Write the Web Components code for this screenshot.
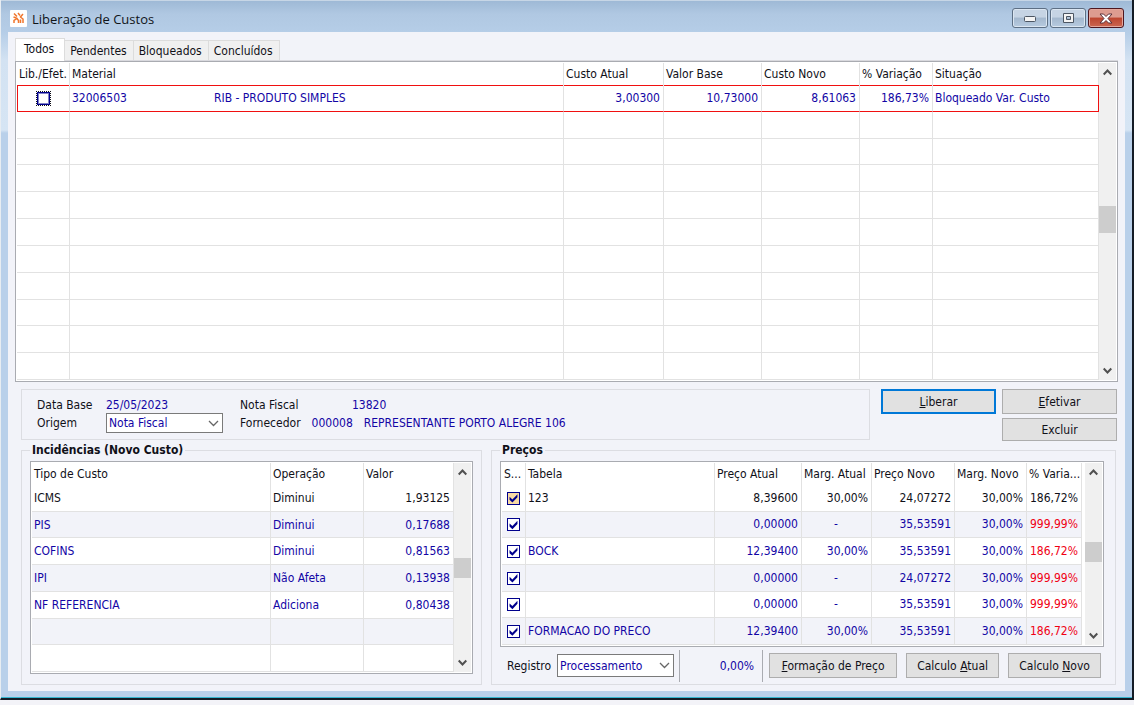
<!DOCTYPE html>
<html lang="pt-BR">
<head>
<meta charset="utf-8">
<title>Liberação de Custos</title>
<style>
  body {
    margin: 0;
    background: #f3f3f8;
    color: #101018;
    font: 12px/16px "DejaVu Sans Condensed", "DejaVu Sans", sans-serif;
    --navy: #1205a5;
    --line: #e2e2e2;
    --edge: #a9abb1;
    --face: #f2f3f9;
  }

  .info-text {
    color: var(--navy);
  }

  .lower {
    display: grid;
    grid-template-columns: 461fr 625fr;
    gap: 9px;
    padding: 0 2px 0 6px;
  }

  .middle {
    display: flex;
    gap: 11px;
    padding: 7px 1px 0 6px;
    height: 53px;
  }

  .middle info-panel {
    flex: 1;
  }

  .actions {
    display: grid;
    grid-template-columns: 115px 115px;
    grid-template-rows: 25px 23px;
    gap: 4px 6px;
  }

  .actions .second {
    grid-column: 2;
  }

  .prices {
    --group-end: 11px;
    --rail-gap: 3px;
  }

  .bar {
    display: flex;
    align-items: center;
    gap: 9px;
    height: 37px;
    padding-left: 7px;
  }

  .bar push-button {
    height: 25px;
  }

  .rate {
    box-sizing: border-box;
    width: 84px;
    height: 32px;
    margin-left: -4px;
    padding-right: 8px;
    border: solid var(--edge);
    border-width: 0 1px;
    line-height: 32px;
    text-align: right;
  }

  .first-button {
    margin-left: -3px;
  }
</style>
</head>
<body>

<app-window heading="Liberação de Custos">
  <tab-bar>
    <tab-item selected>Todos</tab-item>
    <tab-item>Pendentes</tab-item>
    <tab-item>Bloqueados</tab-item>
    <tab-item>Concluídos</tab-item>
  </tab-bar>

  <data-grid id="materials" label="Materiais"></data-grid>

  <div class="middle">
    <info-panel></info-panel>
    <div class="actions">
      <push-button primary><u>L</u>iberar</push-button>
      <push-button><u>E</u>fetivar</push-button>
      <push-button class="second">Excluir</push-button>
    </div>
  </div>

  <div class="lower">
    <group-box legend="Incidências (Novo Custo)">
      <data-grid id="costs" label="Incidências"></data-grid>
    </group-box>
    <group-box class="prices" legend="Preços">
      <data-grid id="prices" label="Preços"></data-grid>
      <div class="bar">
        <combo-field label="Registro" value="Processamento"></combo-field>
        <div class="rate info-text">0,00%</div>
        <push-button class="first-button" style="width: 128px"><u>F</u>ormação de Preço</push-button>
        <push-button style="width: 93px">Calculo <u>A</u>tual</push-button>
        <push-button style="width: 93px">Calculo <u>N</u>ovo</push-button>
      </div>
    </group-box>
  </div>
</app-window>

<script>
class AppWindow extends HTMLElement {
  connectedCallback() {
    this.attachShadow({ mode: 'open' }).innerHTML = `
      <style>
        :host {
          display: block;
          box-sizing: border-box;
          padding: 0 7px 7px;
          border: solid #141c26;
          border-width: 0 2px 2px 1px;
          border-left-color: #e8edf2;
          background: linear-gradient(#9db8d5 0, #b0c8e2 14px, #b5cde7 32px, #d3e2f2 60px, #d6e5f4 130px, #b9d0ea 133px);
          box-shadow: inset 0 1px #c7d6e6, inset 0 -1px #35b6cf;
        }

        header {
          display: flex;
          align-items: center;
          height: 32px;
          padding: 0 1px 0 2px;
          gap: 5px;
        }

        h1 {
          flex: 1;
          margin: 0;
          padding-top: 6px;
          font: 13px/20px "Open Sans", "Noto Sans", sans-serif;
          color: #101418;
        }

        .logo {
          width: 17px;
          height: 17px;
          margin-top: 5px;
        }

        .controls {
          display: flex;
          gap: 2px;
          margin-top: 4px;
        }

        .controls button {
          display: grid;
          place-items: center;
          box-sizing: border-box;
          width: 36px;
          height: 20px;
          padding: 0;
          border: 1px solid #5d6f84;
          border-radius: 3px;
          background: linear-gradient(#c6d4e4 0 45%, #a4b8ce 50%, #b7cbe0);
          box-shadow: inset 0 0 0 1px #dbe6f1;
        }

        .controls .close {
          border-color: #4e1720;
          background: linear-gradient(#dd9c90 0 45%, #bd4630 50%, #cb6651);
          box-shadow: inset 0 0 0 1px #e3a79c;
        }

        main {
          padding: 6px 7px 6px 7px;
          background: var(--face);
        }
      </style>
      <header>
        <svg class="logo" viewBox="0 0 17 17" aria-hidden="true">
          <rect width="17" height="17" rx="1" fill="#fff"/>
          <g fill="none" stroke="#f0762d" stroke-width="1.5">
            <path d="M4 3.5l3 3M8 3l2 2.500M13 4l-3 3.500M3.500 7l3 1M4 13v-2.500l3-2 1.500 2V13M10.500 13V9.500M13 13V9l-2-1.500"/>
          </g>
        </svg>
        <h1></h1>
        <div class="controls">
          <button type="button" aria-label="Minimizar">
            <svg width="14" height="8" viewBox="0 0 14 8"><rect x="1.500" y="2.500" width="11" height="5" rx="1" fill="#f4f4f4" stroke="#4c5663"/></svg>
          </button>
          <button type="button" aria-label="Maximizar">
            <svg width="13" height="11" viewBox="0 0 13 11"><path d="M1.500.5h10v9h-10zM4.500 3.500v3h4v-3z" fill="#f4f4f4" fill-rule="evenodd" stroke="#4c5663"/></svg>
          </button>
          <button type="button" class="close" aria-label="Fechar">
            <svg width="14" height="11" viewBox="0 0 14 11"><path d="M1 1h3.500L7 3.500 9.500 1H13L9 5.500l4 4.500H9.500L7 7.500 4.500 10H1l4-4.500z" fill="#fff" stroke="#5a3038"/></svg>
          </button>
        </div>
      </header>
      <main><slot></slot></main>
    `;
    this.shadowRoot.querySelector('h1').textContent = this.getAttribute('heading');
  }
}

class TabBar extends HTMLElement {
  connectedCallback() {
    this.attachShadow({ mode: 'open' }).innerHTML = `
      <style>
        :host {
          display: block;
        }

        div {
          display: flex;
          align-items: flex-end;
          height: 22px;
          border-bottom: 1px solid #d9d9de;
        }
      </style>
      <div role="tablist"><slot></slot></div>
    `;
  }
}

class TabItem extends HTMLElement {
  connectedCallback() {
    const selected = this.hasAttribute('selected');
    this.attachShadow({ mode: 'open' }).innerHTML = `
      <style>
        :host {
          display: block;
        }

        button {
          display: block;
          box-sizing: border-box;
          height: 20px;
          padding: 0 6px 0 5px;
          border: 1px solid #dcdcdc;
          border-left: 0;
          border-bottom: 0;
          background: #f0f0f0;
          color: inherit;
          font: inherit;
        }

        :host([selected]) button {
          height: 23px;
          margin-bottom: -1px;
          padding: 0 10px 3px 8px;
          border-left: 1px solid #dcdcdc;
          background: #fff;
        }
      </style>
      <button type="button" role="tab" aria-selected="${selected}"><slot></slot></button>
    `;
  }
}

class PushButton extends HTMLElement {
  connectedCallback() {
    this.attachShadow({ mode: 'open' }).innerHTML = `
      <style>
        :host {
          display: block;
        }

        button {
          width: 100%;
          height: 100%;
          padding: 0;
          border: 1px solid #adadad;
          background: #e1e1e1;
          color: inherit;
          font: inherit;
          white-space: nowrap;
        }

        :host([primary]) button {
          border: 2px solid #0078d7;
        }
      </style>
      <button type="button"><slot></slot></button>
    `;
  }
}

class ComboField extends HTMLElement {
  connectedCallback() {
    this.attachShadow({ mode: 'open' }).innerHTML = `
      <style>
        :host {
          display: flex;
          align-items: center;
          gap: 6px;
        }

        .box {
          display: grid;
          align-items: center;
          width: 117px;
        }

        .box > * {
          grid-area: 1 / 1;
        }

        select {
          appearance: none;
          box-sizing: border-box;
          width: 100%;
          height: var(--combo-height, 23px);
          padding: 0 20px 0 2px;
          border: 1px solid #7a7a7a;
          border-radius: 0;
          background: #fff;
          color: var(--navy);
          font: inherit;
        }

        svg {
          justify-self: end;
          margin-right: 4px;
          pointer-events: none;
        }
      </style>
      <label for="select"></label>
      <span class="box">
        <select id="select"><option></option></select>
        <svg width="11" height="7" viewBox="0 0 11 7"><path d="M1 1l4.500 4.500L10 1" fill="none" stroke="#666" stroke-width="1.300"/></svg>
      </span>
    `;
    this.shadowRoot.querySelector('label').textContent = this.getAttribute('label');
    this.shadowRoot.querySelector('option').textContent = this.getAttribute('value');
  }
}

class InfoPanel extends HTMLElement {
  connectedCallback() {
    this.attachShadow({ mode: 'open' }).innerHTML = `
      <style>
        :host {
          display: grid;
          box-sizing: border-box;
          grid-template-columns: 203px 1fr;
          grid-template-rows: 16px 20px;
          align-items: center;
          height: 51px;
          padding: 7px 15px;
          border: 1px solid #dcdde2;
        }

        div {
          display: flex;
        }

        .supplier {
          gap: 11px;
        }

        .date {
          width: 69px;
        }

        .invoice {
          width: 112px;
        }

        .value {
          color: var(--navy);
        }

        combo-field {
          --combo-height: 20px;
          gap: 29px;
        }
      </style>
      <div><span class="date">Data Base</span><span class="value">25/05/2023</span></div>
      <div><span class="invoice">Nota Fiscal</span><span class="value">13820</span></div>
      <combo-field label="Origem" value="Nota Fiscal"></combo-field>
      <div class="supplier">
        <span>Fornecedor</span>
        <span class="value">000008</span>
        <span class="value">REPRESENTANTE PORTO ALEGRE 106</span>
      </div>
    `;
  }
}

class GroupBox extends HTMLElement {
  connectedCallback() {
    this.attachShadow({ mode: 'open' }).innerHTML = `
      <style>
        :host {
          display: block;
          min-width: 0;
        }

        fieldset {
          box-sizing: border-box;
          min-width: 0;
          height: 100%;
          margin: 0;
          padding: 3px var(--group-end, 8px) 0 8px;
          border: 1px solid #dcdde2;
        }

        legend {
          padding: 0 2px;
          font-weight: bold;
          line-height: 16px;
        }
      </style>
      <fieldset><legend></legend><slot></slot></fieldset>
    `;
    this.shadowRoot.querySelector('legend').textContent = this.getAttribute('legend');
  }
}

// before/after are the shares of free track on each side of the thumb
class ScrollRail extends HTMLElement {
  connectedCallback() {
    this.attachShadow({ mode: 'open' }).innerHTML = `
      <style>
        :host {
          display: flex;
          flex-direction: column;
          align-items: center;
          width: 17px;
          padding: 6px 0;
          box-sizing: border-box;
          background: #f0f0f0;
        }

        .thumb {
          width: 17px;
          background: #cdcdcd;
        }

        path {
          fill: none;
          stroke: #505050;
          stroke-width: 2;
        }
      </style>
      <svg width="9" height="7" viewBox="0 0 9 7"><path d="M.7 5.500l3.800-4 3.800 4"/></svg>
      <span style="flex: ${this.getAttribute('before')}"></span>
      <span class="thumb" style="height: ${this.getAttribute('size')}px"></span>
      <span style="flex: ${this.getAttribute('after')}"></span>
      <svg width="9" height="7" viewBox="0 0 9 7"><path d="M.7 1.500l3.800 4 3.800-4"/></svg>
    `;
  }
}

class DataGrid extends HTMLElement {
  constructor() {
    super();
    this.attachShadow({ mode: 'open' });
  }

  setData({ columns, rows, emptyRows = 0, height, striped, rail }) {
    const cols = columns.map(c => `<col${c.width ? ` style="width: ${c.width}px"` : ''}>`).join('');
    const head = columns.map(c => `<th scope="col">${c.title}</th>`).join('');
    const blank = { cells: columns.map(() => '') };
    const all = rows.concat(Array(emptyRows).fill(blank));
    const body = all.map((row, i) => {
      const cells = row.cells.map((value, n) => this.renderCell(value, columns[n], i));
      return `<tr class="${row.kind || ''}">${cells.join('')}</tr>`;
    });

    this.shadowRoot.innerHTML = `
      <style>
        :host {
          display: flex;
          padding: 1px;
          border: 1px solid var(--edge);
          background: #fff;
        }

        table {
          flex: 1;
          width: 0;
          height: ${height}px;
          table-layout: fixed;
          border-collapse: separate;
          border-spacing: 0;
        }

        scroll-rail {
          margin-left: var(--rail-gap, 0);
        }

        th, td {
          box-sizing: border-box;
          height: 22px;
          padding: 0 3px 0 2px;
          border-right: 1px solid var(--line);
          overflow: hidden;
          text-align: left;
          white-space: nowrap;
        }

        th {
          font-weight: normal;
          padding-right: 0;
        }

        td {
          border-bottom: 1px solid var(--line);
          color: var(--navy);
        }

        tr.current td {
          color: inherit;
        }

        .striped tbody tr:nth-child(even) {
          background: var(--face);
        }

        .selected td {
          border-bottom-color: #f01010;
          box-shadow: inset 0 1px #f01010;
        }

        .selected td:first-child {
          box-shadow: inset 1px 1px #f01010;
        }

        .selected td:last-child {
          border-right-color: #f01010;
        }

        .number div {
          display: flex;
          justify-content: flex-end;
          overflow: hidden;
        }

        td.dash div {
          justify-content: center;
        }

        td.check {
          padding: 0;
          text-align: center;
        }

        .alert {
          color: #f00014;
        }

        .code {
          display: inline-block;
          width: 142px;
        }

        input {
          appearance: none;
          display: inline-block;
          box-sizing: border-box;
          width: 13px;
          height: 13px;
          margin: 0;
          border: 1px solid #00008c;
          background: #fff;
          vertical-align: middle;
        }

        input:checked::before {
          content: "";
          display: block;
          width: 11px;
          height: 11px;
          background: #00008c;
          clip-path: polygon(14% 36%, 40% 60%, 86% 12%, 86% 40%, 40% 88%, 14% 64%);
        }

        .current input {
          background: #f7d9a4;
        }

        .selected input {
          outline: 1px dotted #101018;
          box-shadow: inset 0 0 0 1px #8080c8;
        }
      </style>
      <table class="${striped ? 'striped' : ''}" aria-label="${this.getAttribute('label')}">
        <colgroup>${cols}</colgroup>
        <thead><tr>${head}</tr></thead>
        <tbody>${body.join('')}</tbody>
      </table>
      <scroll-rail before="${rail[0]}" size="${rail[1]}" after="${rail[2]}"></scroll-rail>
    `;
  }

  renderCell(value, column, index) {
    if (typeof value === 'boolean') {
      return `<td class="check"><input type="checkbox" aria-label="Selecionar linha ${index + 1}"${value ? ' checked' : ''}></td>`;
    }
    if (Array.isArray(value)) {
      return `<td><span class="code">${value[0]}</span>${value[1]}</td>`;
    }
    const classes = [];
    if (column.number) classes.push('number');
    if (value === '-') classes.push('dash');
    const alert = column.alert && index > 0 ? ' class="alert"' : '';
    return `<td class="${classes.join(' ')}"><div${alert}>${value}</div></td>`;
  }
}

customElements.define('scroll-rail', ScrollRail);
customElements.define('data-grid', DataGrid);
customElements.define('combo-field', ComboField);
customElements.define('push-button', PushButton);
customElements.define('info-panel', InfoPanel);
customElements.define('group-box', GroupBox);
customElements.define('tab-item', TabItem);
customElements.define('tab-bar', TabBar);
customElements.define('app-window', AppWindow);

document.getElementById('materials').setData({
  height: 317,
  rail: [129, 27, 133],
  columns: [
    { title: 'Lib./Efet.', width: 53 },
    { title: 'Material' },
    { title: 'Custo Atual', width: 100, number: true },
    { title: 'Valor Base', width: 98, number: true },
    { title: 'Custo Novo', width: 98, number: true },
    { title: '% Variação', width: 73, number: true },
    { title: 'Situação', width: 166 },
  ],
  rows: [
    { kind: 'selected', cells: [false, ['32006503', 'RIB - PRODUTO SIMPLES'], '3,00300', '10,73000', '8,61063', '186,73%', 'Bloqueado Var. Custo'] },
  ],
  emptyRows: 10,
});

document.getElementById('costs').setData({
  height: 209,
  striped: true,
  rail: [80, 20, 80],
  columns: [
    { title: 'Tipo de Custo' },
    { title: 'Operação', width: 93 },
    { title: 'Valor', width: 90, number: true },
  ],
  rows: [
    { kind: 'current', cells: ['ICMS', 'Diminui', '1,93125'] },
    { cells: ['PIS', 'Diminui', '0,17688'] },
    { cells: ['COFINS', 'Diminui', '0,81563'] },
    { cells: ['IPI', 'Não Afeta', '0,13938'] },
    { cells: ['NF REFERENCIA', 'Adiciona', '0,80438'] },
  ],
  emptyRows: 2,
});

document.getElementById('prices').setData({
  height: 182,
  striped: true,
  rail: [66, 20, 70],
  columns: [
    { title: 'S...', width: 24 },
    { title: 'Tabela' },
    { title: 'Preço Atual', width: 87, number: true },
    { title: 'Marg. Atual', width: 70, number: true },
    { title: 'Preço Novo', width: 83, number: true },
    { title: 'Marg. Novo', width: 72, number: true },
    { title: '% Varia...', width: 55, number: true, alert: true },
  ],
  rows: [
    { kind: 'current', cells: [true, '123', '8,39600', '30,00%', '24,07272', '30,00%', '186,72%'] },
    { cells: [true, '', '0,00000', '-', '35,53591', '30,00%', '999,99%'] },
    { cells: [true, 'BOCK', '12,39400', '30,00%', '35,53591', '30,00%', '186,72%'] },
    { cells: [true, '', '0,00000', '-', '24,07272', '30,00%', '999,99%'] },
    { cells: [true, '', '0,00000', '-', '35,53591', '30,00%', '999,99%'] },
    { cells: [true, 'FORMACAO DO PRECO', '12,39400', '30,00%', '35,53591', '30,00%', '186,72%'] },
  ],
});
</script>
</body>
</html>
